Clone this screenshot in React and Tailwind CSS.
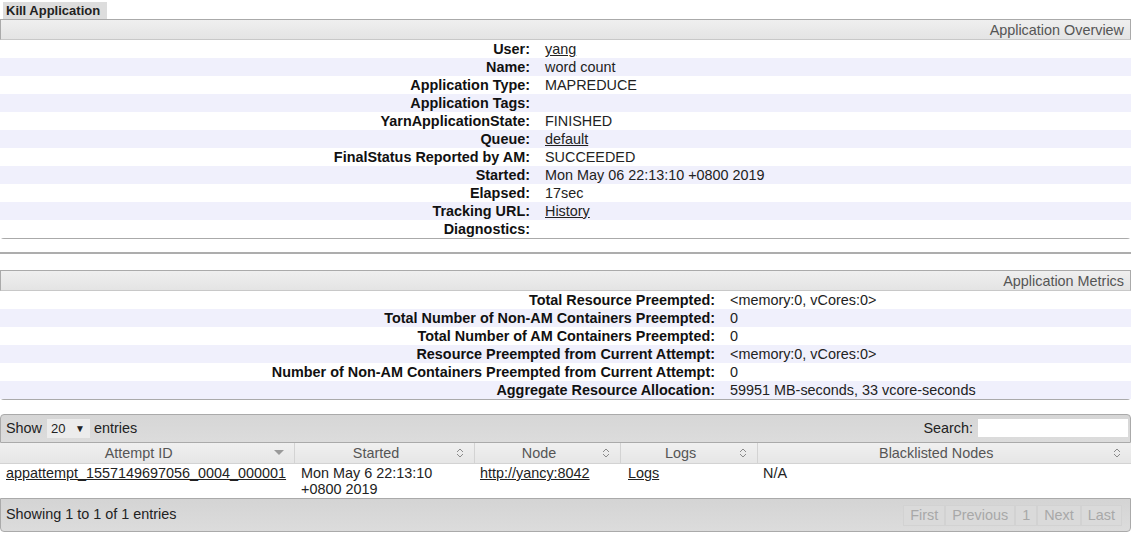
import React from 'react';

const overview = [
    ['User:', 'yang', true],
    ['Name:', 'word count'],
    ['Application Type:', 'MAPREDUCE'],
    ['Application Tags:', ''],
    ['YarnApplicationState:', 'FINISHED'],
    ['Queue:', 'default', true],
    ['FinalStatus Reported by AM:', 'SUCCEEDED'],
    ['Started:', 'Mon May 06 22:13:10 +0800 2019'],
    ['Elapsed:', '17sec'],
    ['Tracking URL:', 'History', true],
    ['Diagnostics:', ''],
];

const metrics = [
    ['Total Resource Preempted:', '<memory:0, vCores:0>'],
    ['Total Number of Non-AM Containers Preempted:', '0'],
    ['Total Number of AM Containers Preempted:', '0'],
    ['Resource Preempted from Current Attempt:', '<memory:0, vCores:0>'],
    ['Number of Non-AM Containers Preempted from Current Attempt:', '0'],
    ['Aggregate Resource Allocation:', '59951 MB-seconds, 33 vcore-seconds'],
];

function SortBoth() {
    return (
        <svg width="8" height="12" viewBox="0 0 8 12" fill="none" stroke="#8a8a8a" strokeWidth="1">
            <path d="M1 5 L4 2 L7 5" />
            <path d="M1 7 L4 10 L7 7" />
        </svg>
    );
}

function SortDown() {
    return (
        <svg width="10" height="6" viewBox="0 0 10 6">
            <path d="M0 0 L10 0 L5 5 Z" fill="#9a9a9a" />
        </svg>
    );
}

function InfoPanel({ title, rows, labelWidth }) {
    return (
        <div className="border-b border-[#aaa] rounded-bl-[4px] rounded-br-[4px]">
            <div className="h-[21px] border border-[#aaa] border-b-[#c8c8c8] bg-linear-to-b from-[#efefef] to-[#e4e4e4] text-right pr-[6px] text-[#555] leading-[21px]">
                {title}
            </div>
            {rows.map(([label, value, link], i) => (
                <div
                    key={label}
                    className={`flex h-[18px] leading-[19px] ${i % 2 ? 'bg-[#f0f0fc]' : 'bg-white'}`}
                >
                    <div className={`${labelWidth} shrink-0 text-right pr-[7px] font-bold text-[#111]`}>{label}</div>
                    <div className="pl-[8px] text-[#222]">
                        {link ? <a href="#" className="underline">{value}</a> : value}
                    </div>
                </div>
            ))}
        </div>
    );
}

const cols = [
    { name: 'Attempt ID', w: 'w-[294px]', sorted: true },
    { name: 'Started', w: 'w-[180px]' },
    { name: 'Node', w: 'w-[146px]' },
    { name: 'Logs', w: 'w-[137px]' },
    { name: 'Blacklisted Nodes', w: '' },
];

const pages = ['First', 'Previous', '1', 'Next', 'Last'];

export default function App() {
    return (
        <div className="w-[1131px] bg-white text-[14.4px] text-[#222]" style={{ fontFamily: '"Liberation Sans", Arial, sans-serif' }}>
            <div className="pt-[2px] pl-[3px]">
                <button className="block h-[17px] w-[104px] bg-[#dddddd] pl-[3px] text-left text-[13px] font-bold leading-[17px] text-[#222]">
                    Kill Application
                </button>
            </div>

            <InfoPanel title="Application Overview" rows={overview} labelWidth="w-[537px]" />

            <div className="mt-[13px] h-[2px] bg-[#adadad]" />

            <div className="mt-[16px]">
                <InfoPanel title="Application Metrics" rows={metrics} labelWidth="w-[722px]" />
            </div>

            <div className="mt-[14px]">
                <div className="flex h-[29px] items-center justify-between border border-[#aaa] rounded-tl-[4px] rounded-tr-[4px] bg-linear-to-b from-[#d6d6d6] to-[#dcdcdc] pl-[5px] pr-[2px]">
                    <div className="flex items-center">
                        <span>Show</span>
                        <span className="ml-[5px] flex h-[19px] w-[43px] items-center bg-[#ececec] pl-[4px] text-[13px]">
                            20
                            <span className="ml-auto mr-[5px] text-[10px]">▼</span>
                        </span>
                        <span className="ml-[4px]">entries</span>
                    </div>
                    <div className="flex items-center">
                        <span>Search:</span>
                        <input className="ml-[5px] h-[18px] w-[150px] bg-white outline-none" />
                    </div>
                </div>

                <table className="w-full table-fixed border-collapse">
                    <thead>
                        <tr>
                            {cols.map((c) => (
                                <th
                                    key={c.name}
                                    className={`${c.w} relative h-[20px] border-r border-b border-[#d3d3d3] bg-linear-to-b from-[#f0f0f0] to-[#e6e6e6] pl-[2px] pr-[18px] py-0 text-center font-normal leading-[20px] text-[#555] last:border-r-0`}
                                >
                                    {c.name}
                                    <span className="absolute right-[10px] top-0 flex h-full items-center">
                                        {c.sorted ? <SortDown /> : <SortBoth />}
                                    </span>
                                </th>
                            ))}
                        </tr>
                    </thead>
                    <tbody>
                        <tr className="align-top leading-[16px]">
                            <td className="pl-[6px] py-[1px]">
                                <a href="#" className="underline">appattempt_1557149697056_0004_000001</a>
                            </td>
                            <td className="pl-[7px] py-[1px]">Mon May 6 22:13:10 +0800 2019</td>
                            <td className="pl-[6px] py-[1px]">
                                <a href="#" className="underline">http://yancy:8042</a>
                            </td>
                            <td className="pl-[8px] py-[1px]">
                                <a href="#" className="underline">Logs</a>
                            </td>
                            <td className="pl-[6px] py-[1px]">N/A</td>
                        </tr>
                    </tbody>
                </table>

                <div className="flex h-[34px] items-center justify-between border border-[#aaa] rounded-bl-[4px] rounded-br-[4px] bg-linear-to-b from-[#d4d4d4] to-[#dcdcdc] pl-[5px] pr-[8px]">
                    <span>Showing 1 to 1 of 1 entries</span>
                    <div className="flex">
                        {pages.map((p) => (
                            <span
                                key={p}
                                className="h-[21px] border border-[#d2d2d2] bg-[#dadada] px-[6px] leading-[19px] text-[#a8a8a8]"
                            >
                                {p}
                            </span>
                        ))}
                    </div>
                </div>
            </div>
        </div>
    );
}
